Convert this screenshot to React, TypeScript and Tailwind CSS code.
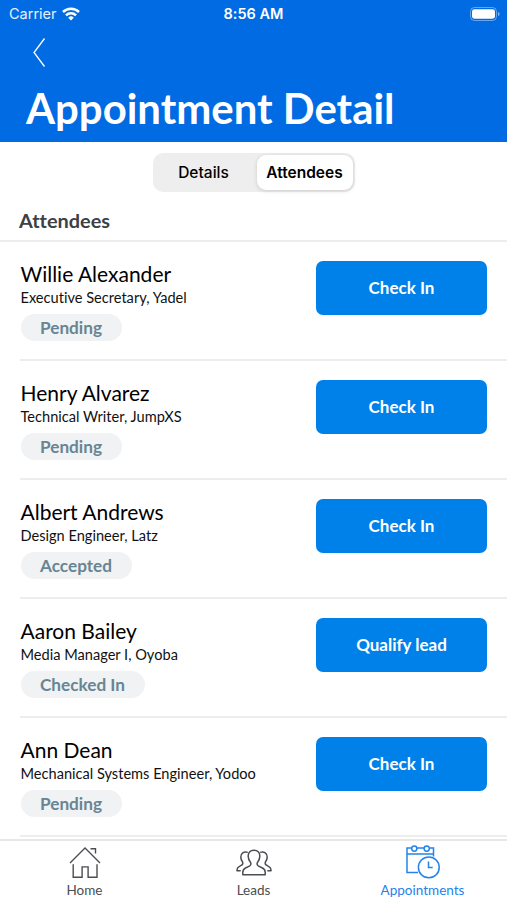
type Attendee = {
  name: string
  role: string
  status: string
  action: string
}

const attendees: Attendee[] = [
  { name: 'Willie Alexander', role: 'Executive Secretary, Yadel', status: 'Pending', action: 'Check In' },
  { name: 'Henry Alvarez', role: 'Technical Writer, JumpXS', status: 'Pending', action: 'Check In' },
  { name: 'Albert Andrews', role: 'Design Engineer, Latz', status: 'Accepted', action: 'Check In' },
  { name: 'Aaron Bailey', role: 'Media Manager I, Oyoba', status: 'Checked In', action: 'Qualify lead' },
  { name: 'Ann Dean', role: 'Mechanical Systems Engineer, Yodoo', status: 'Pending', action: 'Check In' },
]

function WifiIcon() {
  return (
    <svg width="18" height="14" viewBox="0 0 18 14" fill="none" stroke="#fff" strokeWidth="2.5">
      <path d="M1 5a11.300 11.300 0 0 1 16 0" />
      <path d="M4 8.300a7.100 7.100 0 0 1 10 0" />
      <path d="M9 13.500 6.200 10.700a4 4 0 0 1 5.600 0z" fill="#fff" stroke="none" />
    </svg>
  )
}

function BatteryIcon() {
  return (
    <svg width="30" height="14" viewBox="0 0 30 14" fill="none">
      <rect x="0.5" y="0.5" width="26" height="13" rx="4" stroke="#fff" strokeOpacity="0.4" />
      <rect x="2" y="2.300" width="23" height="9.400" rx="2.400" fill="#fff" />
      <path d="M28 5v4c1-.4 1.600-1.100 1.600-2S29 5.400 28 5z" fill="#fff" fillOpacity="0.5" />
    </svg>
  )
}

function HomeIcon() {
  return (
    <svg width="32" height="32" viewBox="0 0 32 32" fill="none" stroke="currentColor" strokeWidth="1.4">
      <path d="M1 16 16 1l15 15" />
      <path d="M21.500 1.700h5v4.800" />
      <path d="M4.200 17.200v13.100h8.900V19.900h6v10.400h8.900V17.200" />
    </svg>
  )
}

function LeadsIcon() {
  return (
    <svg width="36" height="28" viewBox="0 0 36 28" fill="none" stroke="currentColor" strokeWidth="1.5" strokeLinejoin="round">
      <path d="M18 1.200c-4 0-6 2.600-5.800 6.200.1 2.500.9 4.300 2.200 5.900 1 1.300.5 3.100-1 3.800l-3.900 1.900c-1.800.9-2.700 2.300-2.700 4.300v2.500h22.400v-2.500c0-2-.9-3.400-2.700-4.300l-3.900-1.900c-1.500-.7-2-2.500-1-3.800 1.300-1.600 2.100-3.400 2.200-5.900.2-3.600-1.800-6.200-5.800-6.200z" />
      <path d="M11.800 3.400c-3.900-1.300-7.200.8-7 4.700.1 2 .7 3.500 1.600 4.700.9 1.200.4 2.700-.9 3.400l-2 1.100C1.700 18.200 1 19.300 1 21v.8h3.700" />
      <path d="M24.200 3.400c3.900-1.300 7.200.8 7 4.700-.1 2-.7 3.500-1.600 4.700-.9 1.200-.4 2.700.9 3.400l2 1.100c1.800.9 2.500 2 2.500 3.700v.8h-3.700" />
    </svg>
  )
}

function AppointmentsIcon() {
  return (
    <svg width="34" height="34" viewBox="0 0 34 34" fill="none" stroke="currentColor" strokeWidth="1.5">
      <path d="M5.700 3H1v24.500h11" />
      <path d="M10.900 3h7.200M23.300 3h4.200v8.500" />
      <path d="M1 9h26.500" />
      <circle cx="8.300" cy="3.600" r="2.600" />
      <circle cx="20.700" cy="3.600" r="2.600" />
      <circle cx="22.800" cy="22.400" r="10.400" />
      <path d="M22.500 16.500v6h4.200" />
    </svg>
  )
}

function AttendeeRow({ attendee }: { attendee: Attendee }) {
  return (
    <li className="ml-5 flex h-[119px] shrink-0 items-start justify-between border-b-2 border-[#ededee] pr-5 pt-[19px]">
      <div className="pl-[0.5px]">
        <h3 className="text-[21px] leading-[26px] text-black">{attendee.name}</h3>
        <p className="text-[14.600px] leading-[22px] text-[#111]">{attendee.role}</p>
        <span className="mt-[5px] inline-block h-[27px] rounded-full bg-[#f0f2f3] px-[19.500px] text-[17.200px] font-bold leading-[27px] text-[#678593]">
          {attendee.status}
        </span>
      </div>
      <button className="h-[54px] w-[171px] rounded-[7px] bg-[#0081e9] text-[17px] font-bold text-white">
        {attendee.action}
      </button>
    </li>
  )
}

export default function App() {
  return (
    <div className="flex h-[900px] w-[507px] flex-col overflow-hidden bg-white font-['Lato',sans-serif] [font-variant-ligatures:none]">
      <header className="h-[142px] shrink-0 bg-[#006be2] text-white">
        <div className="grid h-7 grid-cols-3 items-center pl-[9px] pr-[7px] font-['Inter',sans-serif] text-[14.500px]">
          <div className="flex items-center gap-[5px]">
            <span className="text-white/90">Carrier</span>
            <WifiIcon />
          </div>
          <span className="-ml-0.5 text-center font-semibold">8:56 AM</span>
          <div className="flex justify-end pb-px">
            <BatteryIcon />
          </div>
        </div>
        <button className="ml-8 mt-[9px] block">
          <svg width="14" height="31" viewBox="0 0 14 31" fill="none" stroke="#fff" strokeWidth="1.300">
            <path d="M12.500 1.500 2 15.500l10.500 14" />
          </svg>
        </button>
        <h1 className="ml-[26px] mt-[14px] text-[41.900px] font-bold leading-[52px]">Appointment Detail</h1>
      </header>

      <div className="flex h-[60px] shrink-0 items-center justify-center font-['Inter',sans-serif] text-[15.500px] text-black">
        <div className="flex h-[39px] w-[202px] rounded-[10px] bg-[#eeeeef] p-[2px]">
          <button className="w-[102px] pr-1 pt-px font-medium">Details</button>
          <button className="w-[96px] rounded-[9px] bg-white pt-px font-semibold shadow-[0_1px_4px_rgba(0,0,0,0.15)]">Attendees</button>
        </div>
      </div>

      <h2 className="h-10 shrink-0 border-b-2 border-[#ededee] pl-[19px] text-[19.900px] font-bold leading-[37px] text-[#3d4045]">
        Attendees
      </h2>

      <ul className="flex h-[597px] shrink-0 flex-col overflow-hidden">
        {attendees.map((attendee) => (
          <AttendeeRow key={attendee.name} attendee={attendee} />
        ))}
      </ul>

      <nav className="grid h-[61px] shrink-0 grid-cols-3 border-t-2 border-[#e7e7e8] text-[13.500px] text-[#4b4d50]">
        <a className="flex flex-col items-center">
          <span className="flex h-[41px] items-center pt-[3px]"><HomeIcon /></span>
          <span className="leading-4">Home</span>
        </a>
        <a className="flex flex-col items-center">
          <span className="flex h-[41px] items-center pt-[3px]"><LeadsIcon /></span>
          <span className="leading-4">Leads</span>
        </a>
        <a className="flex flex-col items-center text-[#2482ea]">
          <span className="flex h-[41px] items-center"><AppointmentsIcon /></span>
          <span className="leading-4">Appointments</span>
        </a>
      </nav>
    </div>
  )
}
